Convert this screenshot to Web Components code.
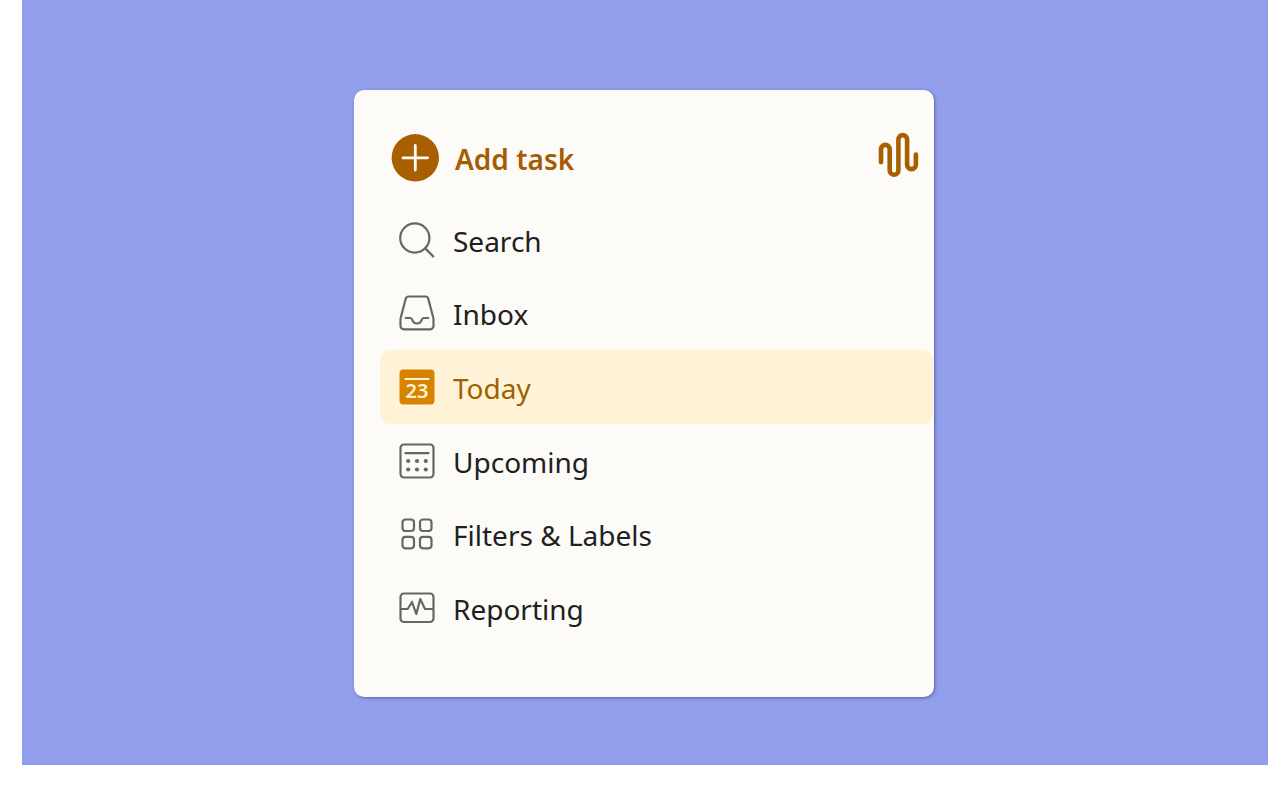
<!DOCTYPE html>
<html lang="en">
<head>
<meta charset="utf-8">
<meta name="viewport" content="width=device-width, initial-scale=1">
<title>Tasks</title>
<style>
  body {
    margin: 0;
    min-height: 100vh;
    box-sizing: border-box;
    display: flex;
    padding: 0 20px 23px 22px;
    background: #fff;
    font-family: "Segoe UI", "Noto Sans", sans-serif;
    font-size: 28px;
    line-height: 36px;
    color: #202020;
  }
</style>
</head>
<body>
<task-stage>
  <task-sidebar>
    <add-task slot="header">Add task</add-task>
    <ramble-button slot="header"></ramble-button>
    <nav-item icon="search">Search</nav-item>
    <nav-item icon="inbox" href="#inbox">Inbox</nav-item>
    <nav-item icon="today" href="#today" current>Today</nav-item>
    <nav-item icon="upcoming" href="#upcoming">Upcoming</nav-item>
    <nav-item icon="filters" href="#filters">Filters &amp; Labels</nav-item>
    <nav-item icon="reporting" href="#reporting">Reporting</nav-item>
  </task-sidebar>
</task-stage>

<script>
const icons = {
  search: `
    <circle cx="15.8" cy="16" r="14.6"/>
    <path d="M26.2 26.4l8 8"/>`,
  inbox: `
    <path d="M9.6 1.5h16.8a3 3 0 0 1 2.9 2.2L34.2 22.5q.3 1 .3 2V31a3.3 3.3 0 0 1-3.3 3.3H4.8A3.3 3.3 0 0 1 1.5 31v-6.5q0-1 .3-2L6.7 3.7a3 3 0 0 1 2.9-2.2z"/>
    <path d="M6.8 23h4.4c1.5 0 1.7.7 2.1 2 .7 2.300 2.400 3.500 4.700 3.500s4-1.200 4.700-3.500c.4-1.300.6-2 2.100-2h4.400"/>`,
  today: `
    <rect x="0.5" y="0.5" width="35" height="35" rx="4" fill="#d68400" stroke="none"/>
    <path d="M6.5 10h23" stroke="#fff2d7"/>
    <text x="18" y="29" text-anchor="middle" font-size="20" font-weight="600" fill="#fff2d7" stroke="none">23</text>`,
  upcoming: `
    <rect x="1.5" y="1.5" width="33" height="33" rx="3.5"/>
    <path d="M6.5 10.2h23"/>
    <g fill="currentColor" stroke="none">
      <circle cx="9.2" cy="18" r="2.1"/><circle cx="18" cy="18" r="2.1"/><circle cx="26.8" cy="18" r="2.1"/>
      <circle cx="9.2" cy="26.5" r="2.1"/><circle cx="18" cy="26.5" r="2.1"/><circle cx="26.8" cy="26.5" r="2.1"/>
    </g>`,
  filters: `
    <rect x="3.5" y="3.5" width="11.5" height="11.5" rx="3"/>
    <rect x="21" y="3.5" width="11.5" height="11.5" rx="3"/>
    <rect x="3.5" y="20.8" width="11.5" height="11.5" rx="3"/>
    <rect x="21" y="20.8" width="11.5" height="11.5" rx="3"/>`,
  reporting: `
    <rect x="1.5" y="3.5" width="33" height="28.5" rx="3.5"/>
    <path d="M2 19h6.7l4.300-7 4.300 12 4-15 4.700 10h8"/>`,
};

const stageTemplate = document.createElement('template');
stageTemplate.innerHTML = `
  <style>
    :host {
      display: flex;
      flex: 1;
      justify-content: center;
      align-items: flex-start;
      min-width: 0;
      box-sizing: border-box;
      padding: 90px 32px 68px 30px;
      background: #919eeb;
    }
  </style>
  <slot></slot>
`;

class TaskStage extends HTMLElement {
  constructor() {
    super();
    this.attachShadow({mode: 'open'}).appendChild(stageTemplate.content.cloneNode(true));
  }
}

const sidebarTemplate = document.createElement('template');
sidebarTemplate.innerHTML = `
  <style>
    :host {
      display: block;
      width: 100%;
      max-width: 580px;
      box-sizing: border-box;
      padding: 44px 0 52px;
      border-radius: 10px;
      background: #fdfbf8;
      box-shadow: 1px 1px 3px rgba(40, 40, 90, 0.5);
    }
    header {
      display: flex;
      justify-content: space-between;
      align-items: flex-start;
      padding: 0 14px 21px 37px;
    }
    nav {
      display: grid;
      grid-auto-rows: 1fr;
      min-height: 442px;
      padding: 0 1px 0 26px;
    }
  </style>
  <header><slot name="header"></slot></header>
  <nav aria-label="Views"><slot></slot></nav>
`;

class TaskSidebar extends HTMLElement {
  constructor() {
    super();
    this.attachShadow({mode: 'open'}).appendChild(sidebarTemplate.content.cloneNode(true));
  }
}

const addTemplate = document.createElement('template');
addTemplate.innerHTML = `
  <style>
    :host { display: block; }
    button {
      display: flex;
      align-items: center;
      gap: 16px;
      padding: 0;
      border: 0;
      background: none;
      color: #a65c00;
      font: inherit;
      font-weight: 600;
      cursor: pointer;
    }
    svg { display: block; }
    span { padding-top: 2px; }
  </style>
  <button type="button">
    <svg width="48" height="48" viewBox="0 0 48 48" aria-hidden="true">
      <circle cx="24.3" cy="23.8" r="23.7" fill="#a85f00"/>
      <path d="M12 23.800h24.600M24.300 11.500v24.600" stroke="#fdfbf8" stroke-width="2.8" stroke-linecap="round"/>
    </svg>
    <span><slot></slot></span>
  </button>
`;

class AddTask extends HTMLElement {
  constructor() {
    super();
    this.attachShadow({mode: 'open'}).appendChild(addTemplate.content.cloneNode(true));
  }
}

const rambleTemplate = document.createElement('template');
rambleTemplate.innerHTML = `
  <style>
    :host { display: block; }
    button {
      display: block;
      padding: 0;
      border: 0;
      background: none;
      color: #a85f00;
      cursor: pointer;
    }
    svg {
      display: block;
      overflow: visible;
    }
  </style>
  <button type="button" aria-label="Dictate">
    <svg width="42" height="44" viewBox="0 2 42 44" fill="none" stroke="currentColor" stroke-width="4.6" stroke-linecap="round" aria-hidden="true">
      <path d="M3 30.300V17.200a4.350 4.350 0 0 1 8.700 0v21.200a4.350 4.350 0 0 0 8.700 0V7.500a4.350 4.350 0 0 1 8.700 0v25.200a4.400 4.400 0 0 0 8.800 0V22.500"/>
    </svg>
  </button>
`;

class RambleButton extends HTMLElement {
  constructor() {
    super();
    this.attachShadow({mode: 'open'}).appendChild(rambleTemplate.content.cloneNode(true));
  }
}

const itemTemplate = document.createElement('template');
itemTemplate.innerHTML = `
  <style>
    :host { display: grid; }
    a, button {
      display: flex;
      align-items: center;
      gap: 18px;
      padding: 0 19px;
      border: 0;
      border-radius: 10px;
      background: none;
      color: inherit;
      font: inherit;
      text-align: left;
      text-decoration: none;
      cursor: pointer;
    }
    svg {
      display: block;
      flex: none;
      color: #666;
    }
    span { padding-top: 2px; }
    :host([current]) a {
      background: #fff2d7;
      color: #9c6200;
    }
  </style>
`;

class NavItem extends HTMLElement {

  #shadowRoot;

  constructor() {
    super();
    this.#shadowRoot = this.attachShadow({mode: 'open'});
    this.#shadowRoot.appendChild(itemTemplate.content.cloneNode(true));
  }

  connectedCallback() {
    if (this.#shadowRoot.querySelector('a, button')) return;
    const href = this.getAttribute('href');
    const control = document.createElement(href ? 'a' : 'button');
    if (href) {
      control.href = href;
    } else {
      control.type = 'button';
    }
    if (this.hasAttribute('current')) control.setAttribute('aria-current', 'page');
    control.innerHTML = `
      <svg width="36" height="36" viewBox="0 0 36 36" fill="none" stroke="currentColor" stroke-width="2.2" stroke-linecap="round" stroke-linejoin="round" aria-hidden="true">
        ${icons[this.getAttribute('icon')]}
      </svg>
      <span><slot></slot></span>
    `;
    this.#shadowRoot.appendChild(control);
  }
}

customElements.define('task-stage', TaskStage);
customElements.define('task-sidebar', TaskSidebar);
customElements.define('add-task', AddTask);
customElements.define('ramble-button', RambleButton);
customElements.define('nav-item', NavItem);
</script>
</body>
</html>
